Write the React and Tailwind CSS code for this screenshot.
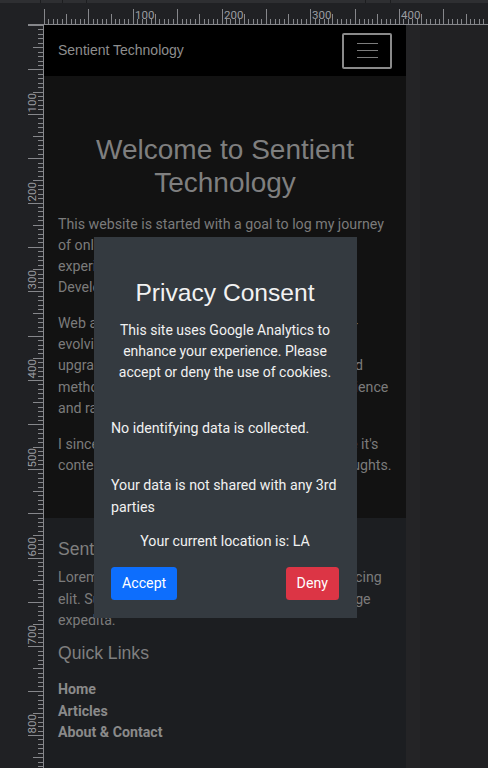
import React from "react";

const S = 0.8875;

function TopRuler() {
  const ticks = [];
  const labels = [];
  for (let u = 0; u <= 500; u += 5) {
    const x = Math.round(44 + u * S) + 0.5;
    if (x > 489) break;
    const len = u % 50 === 0 ? 15 : u % 25 === 0 ? 10 : 5;
    ticks.push(<line key={u} x1={x} x2={x} y1={24 - len} y2={24} />);
    if (u % 100 === 0 && u > 0) {
      labels.push(
        <text key={"t" + u} x={x + 1.5} y={19} fontSize="11.5" fill="#9a9ca0" fontFamily="Roboto, Arial, sans-serif">
          {u}
        </text>
      );
    }
  }
  return (
    <svg width="488" height="25" className="block shrink-0">
      <rect x="0" y="0" width="488" height="3" fill="#2e2f32" />
      <g stroke="#1c1d1f" strokeWidth="1">
        <line x1="40.5" x2="40.5" y1="0" y2="3" />
        <line x1="62.5" x2="62.5" y1="0" y2="3" />
        <line x1="86.5" x2="86.5" y1="0" y2="3" />
        <line x1="365.5" x2="365.5" y1="0" y2="3" />
        <line x1="390.5" x2="390.5" y1="0" y2="3" />
      </g>
      <g stroke="#86878b" strokeWidth="1">
        {ticks}
        <line x1="44" x2="488" y1="24.5" y2="24.5" />
        <line x1="28" x2="44" y1="24.5" y2="24.5" />
      </g>
      {labels}
    </svg>
  );
}

function LeftRuler() {
  const ticks = [];
  const labels = [];
  for (let u = 0; u <= 900; u += 5) {
    const y = Math.round(u * S) + 0.5;
    if (y > 744) break;
    const len = u % 50 === 0 ? 15 : u % 25 === 0 ? 10 : 5;
    ticks.push(<line key={u} x1={43 - len} x2={43} y1={y} y2={y} />);
    if (u % 100 === 0 && u > 0) {
      labels.push(
        <text
          key={"t" + u}
          x="0"
          y="0"
          transform={`translate(36 ${y - 2}) rotate(-90)`}
          fontSize="11.5"
          fill="#9a9ca0"
          fontFamily="Roboto, Arial, sans-serif"
        >
          {u}
        </text>
      );
    }
  }
  return (
    <svg width="44" height="743" className="block shrink-0">
      <g stroke="#86878b" strokeWidth="1">
        {ticks}
        <line x1="43.5" x2="43.5" y1="0" y2="743" />
      </g>
      {labels}
    </svg>
  );
}

export default function App() {
  return (
    <div className="w-[488px] h-[768px] overflow-hidden bg-[#202124] flex flex-col font-['Roboto',sans-serif]">
      <TopRuler />
      <div className="flex flex-1 min-h-0">
        <LeftRuler />
        <div className="w-[362px] shrink-0 relative flex flex-col overflow-hidden">
          {/* Navbar */}
          <nav className="h-[51px] shrink-0 bg-black flex items-center justify-between pl-[14px] pr-[14px]">
            <span className="font-['Liberation_Sans',Arial,sans-serif] text-[14px] text-[#8e8e8e]">
              Sentient Technology
            </span>
            <div className="w-[50px] h-[36px] border-2 border-[#8a8a8a] rounded-[2px] flex flex-col items-center justify-center gap-[5.5px]">
              <div className="w-[21px] h-[1.5px] bg-[#7c7c7c]" />
              <div className="w-[21px] h-[1.5px] bg-[#7c7c7c]" />
              <div className="w-[21px] h-[1.5px] bg-[#7c7c7c]" />
            </div>
          </nav>

          {/* Main */}
          <main className="shrink-0 bg-[#121212] px-[14px] pt-[56.5px] pb-[42px]">
            <h1 className="text-center font-['Liberation_Sans',Arial,sans-serif] text-[28px] leading-[33px] text-[#7f7f7f] mb-[15px]">
              Welcome to Sentient Technology
            </h1>
            <div className="text-[14.2px] leading-[21.3px] text-[#7b7b7b] whitespace-nowrap">
              <p className="mb-[14.2px]">
                This website is started with a goal to log my journey
                <br />
                of online learning and share the knowledge and
                <br />
                experience I have gained in Web and Software
                <br />
                Development.
              </p>
              <p className="mb-[14.2px]">
                Web and Software Development is truly an ever-
                <br />
                evolving field that needs one to constantly
                <br />
                upgrade their skill and learn about new tools and
                <br />
                methods. This site is a log of my learning experience
                <br />
                and random thoughts along the way.
              </p>
              <p>
                I sincerely hope that you enjoy this site because it's
                <br />
                content is a reflection of my own ideas and thoughts.
              </p>
            </div>
          </main>

          {/* Footer */}
          <footer className="flex-1 bg-[#1c1e21] px-[14px] pt-[20.4px]">
            <h5 className="font-['Liberation_Sans',Arial,sans-serif] text-[17.6px] leading-[21.3px] text-[#7f7f7f] mb-[7.6px]">
              Sentient Technology
            </h5>
            <p className="text-[14.2px] leading-[21.3px] text-[#7b7b7b] whitespace-nowrap mb-[12px]">
              Lorem ipsum dolor sit amet consectetur adipisicing
              <br />
              elit. Sunt ipsum vel aperiam laudantium challenge
              <br />
              expedita.
            </p>
            <h5 className="font-['Liberation_Sans',Arial,sans-serif] text-[17.6px] leading-[21.3px] text-[#7f7f7f] mb-[14.7px]">
              Quick Links
            </h5>
            <ul className="text-[14.2px] leading-[21.3px] font-bold text-[#8a8a8a]">
              <li>Home</li>
              <li>Articles</li>
              <li>About &amp; Contact</li>
            </ul>
          </footer>

          {/* Modal */}
          <div className="absolute left-[50px] top-[212px] w-[263px] h-[381px] bg-[#343a40] pl-[17px] pr-[18px] pt-[41px] pb-[18px] text-[#f1f1f1]">
            <h2 className="text-center font-['Liberation_Sans',Arial,sans-serif] text-[24.6px] leading-[29.5px] text-[#f2f2f2]">
              Privacy Consent
            </h2>
            <p className="mt-[12px] text-center text-[14px] leading-[21.3px] whitespace-nowrap">
              This site uses Google Analytics to
              <br />
              enhance your experience. Please
              <br />
              accept or deny the use of cookies.
            </p>
            <p className="mt-[35px] text-[14.2px] leading-[21.3px] whitespace-nowrap">
              No identifying data is collected.
            </p>
            <p className="mt-[35.7px] text-[14.2px] leading-[21.3px] whitespace-nowrap">
              Your data is not shared with any 3rd
              <br />
              parties
            </p>
            <p className="mt-[13.5px] text-center text-[14.2px] leading-[21.3px] whitespace-nowrap">
              Your current location is: LA
            </p>
            <div className="mt-[14.2px] flex justify-between">
              <button className="h-[33px] px-[11px] rounded-[3.5px] bg-[#0d6efd] text-white text-[14.2px]">
                Accept
              </button>
              <button className="h-[33px] px-[11px] rounded-[3.5px] bg-[#dc3545] text-white text-[14.2px]">
                Deny
              </button>
            </div>
          </div>
        </div>
        <div className="w-[14px] shrink-0 bg-[#242426]" />
        <div className="flex-1 bg-[#212123]" />
      </div>
    </div>
  );
}
